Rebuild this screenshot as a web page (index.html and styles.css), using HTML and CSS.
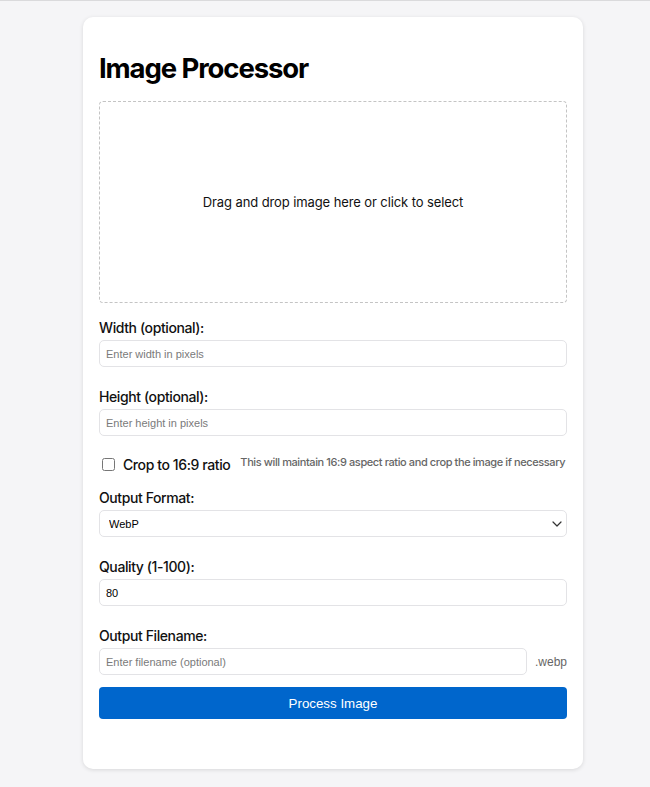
FILE: index.html
```html
<!DOCTYPE html>
<html lang="en">
<head>
<meta charset="utf-8">
<title>Image Processor</title>
<link rel="stylesheet" href="styles.css">
</head>
<body>
<main class="card">
  <h1 class="title">Image Processor</h1>
  <div class="dropzone">Drag and drop image here or click to select</div>

  <div class="group">
    <label class="label" for="w">Width (optional):</label>
    <input class="field" id="w" type="text" placeholder="Enter width in pixels">
  </div>

  <div class="group">
    <label class="label" for="h">Height (optional):</label>
    <input class="field" id="h" type="text" placeholder="Enter height in pixels">
  </div>

  <div class="check-row">
    <input class="check" id="crop" type="checkbox">
    <label class="check-label" for="crop">Crop to 16:9 ratio</label>
    <span class="hint">This will maintain 16:9 aspect ratio and crop the image if necessary</span>
  </div>

  <div class="group">
    <label class="label" for="fmt">Output Format:</label>
    <div class="select-wrap">
      <select class="field select" id="fmt">
        <option>WebP</option>
        <option>JPEG</option>
        <option>PNG</option>
      </select>
      <svg class="chevron" width="10" height="6" viewBox="0 0 10 6" aria-hidden="true"><path d="M1 1 5 5 9 1" fill="none" stroke="#333" stroke-width="1.2" stroke-linecap="round" stroke-linejoin="round"/></svg>
    </div>
  </div>

  <div class="group">
    <label class="label" for="q">Quality (1-100):</label>
    <input class="field" id="q" type="text" value="80">
  </div>

  <div class="group last">
    <label class="label" for="fn">Output Filename:</label>
    <div class="name-row">
      <input class="field" id="fn" type="text" placeholder="Enter filename (optional)">
      <span class="ext">.webp</span>
    </div>
  </div>

  <button class="btn" type="button">Process Image</button>
</main>
</body>
</html>
```

FILE: styles.css
```css
* { box-sizing: border-box; }

html, body { margin: 0; }

body {
  background: #f5f5f7;
  border-top: 1px solid #dadadc;
  padding: 16px 0 0 16px;
  min-height: 787px;
  font-family: Inter, "Noto Sans", sans-serif;
  color: #111;
}

.card {
  width: 500px;
  margin: 0 auto;
  background: #fff;
  border-radius: 10px;
  box-shadow: 0 1px 4px rgba(0, 0, 0, 0.12);
  padding: 34px 16px 50px;
}

.title {
  margin: 0 0 16px;
  font-size: 27.5px;
  line-height: 34px;
  font-weight: 700;
  color: #000;
  letter-spacing: -1.1px;
}

.dropzone {
  height: 202px;
  border: 1px dashed #c4c4c4;
  border-radius: 4px;
  display: flex;
  align-items: center;
  justify-content: center;
  font-size: 13px;
  letter-spacing: -0.1px;
  color: #111;
  margin-bottom: 16px;
}

.group { margin-bottom: 21px; }
.group.last { margin-bottom: 12px; }

.label {
  display: block;
  font-size: 14px;
  line-height: 17px;
  font-weight: 500;
  letter-spacing: -0.4px;
  margin-bottom: 4px;
  color: #111;
}

.field {
  display: block;
  width: 100%;
  height: 27px;
  border: 1px solid #e3e3e6;
  border-radius: 5px;
  padding: 0 6px;
  font-family: "Liberation Sans", Arial, sans-serif;
  font-size: 11px;
  color: #000;
  background: #fff;
  outline: none;
}

.field::placeholder { color: #7a7a7a; }

.select-wrap { position: relative; }

.select {
  appearance: none;
  -webkit-appearance: none;
  padding-left: 9px;
}

.chevron {
  position: absolute;
  right: 5px;
  top: 11px;
  pointer-events: none;
}

.check-row {
  display: flex;
  align-items: center;
  height: 19px;
  margin: -2px 0 15px;
  white-space: nowrap;
}

.check {
  flex: none;
  width: 13px;
  height: 13px;
  margin: 0 8px 0 3px;
}

.check-label {
  flex: none;
  font-size: 14px;
  line-height: 17px;
  font-weight: 500;
  letter-spacing: -0.4px;
  color: #111;
  margin-right: 10px;
}

.hint {
  flex: none;
  font-size: 11px;
  color: #666;
  font-weight: 500;
  letter-spacing: -0.4px;
  margin-bottom: 6px;
}

.name-row {
  display: flex;
  align-items: center;
  gap: 8px;
}

.name-row .field { flex: 1; }

.ext {
  font-family: "Liberation Sans", Arial, sans-serif;
  font-size: 12px;
  color: #666;
}

.btn {
  display: block;
  width: 100%;
  height: 32px;
  border: none;
  border-radius: 4px;
  background: #0066cc;
  color: #fff;
  font-family: "Liberation Sans", Arial, sans-serif;
  font-size: 13.33px;
}
```
